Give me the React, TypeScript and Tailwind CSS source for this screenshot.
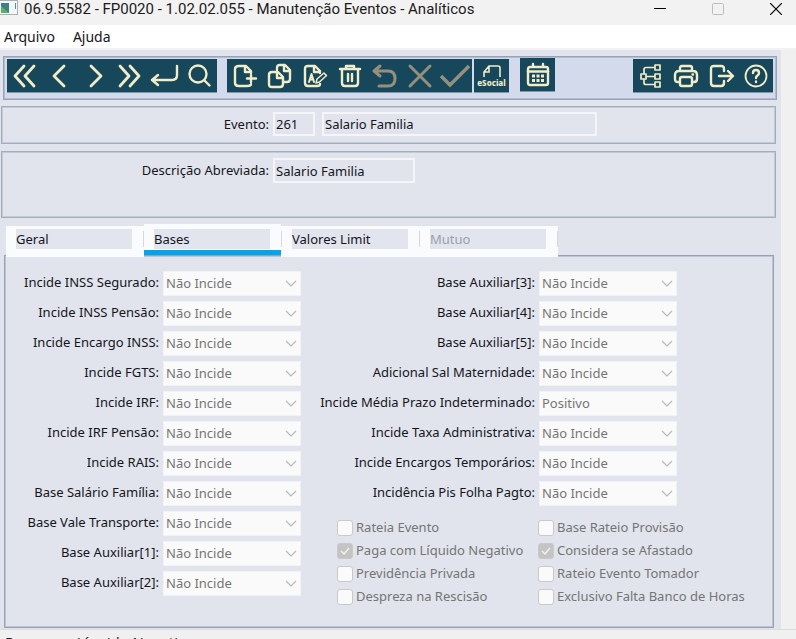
import React from "react";

const leftFields = [
  "Incide INSS Segurado:",
  "Incide INSS Pensão:",
  "Incide Encargo INSS:",
  "Incide FGTS:",
  "Incide IRF:",
  "Incide IRF Pensão:",
  "Incide RAIS:",
  "Base Salário Família:",
  "Base Vale Transporte:",
  "Base Auxiliar[1]:",
  "Base Auxiliar[2]:",
];

const rightFields = [
  "Base Auxiliar[3]:",
  "Base Auxiliar[4]:",
  "Base Auxiliar[5]:",
  "Adicional Sal Maternidade:",
  "Incide Média Prazo Indeterminado:",
  "Incide Taxa Administrativa:",
  "Incide Encargos Temporários:",
  "Incidência Pis Folha Pagto:",
];

const checks = [
  { label: "Rateia Evento", on: false },
  { label: "Base Rateio Provisão", on: false },
  { label: "Paga com Líquido Negativo", on: true },
  { label: "Considera se Afastado", on: true },
  { label: "Previdência Privada", on: false },
  { label: "Rateio Evento Tomador", on: false },
  { label: "Despreza na Rescisão", on: false },
  { label: "Exclusivo Falta Banco de Horas", on: false },
];

function Tool({ label, off, children }: { label: string; off?: boolean; children: React.ReactNode }) {
  return (
    <button
      type="button"
      aria-label={label}
      disabled={off}
      className="flex h-full w-[35px] items-center justify-center text-[#f1edc9] disabled:text-[#958f7d]"
    >
      <svg
        viewBox="0 0 24 24"
        className="size-6 overflow-visible"
        fill="none"
        stroke="currentColor"
        strokeWidth="2.4"
        strokeLinecap="round"
        strokeLinejoin="round"
      >
        {children}
      </svg>
    </button>
  );
}

function Field({ label, value }: { label: string; value: string }) {
  const id = label.replace(/\W/g, "");
  return (
    <div className="flex h-[30px] items-start justify-end gap-1">
      <label htmlFor={id} className="leading-[22px] whitespace-nowrap">
        {label}
      </label>
      <div className="relative">
        <select
          id={id}
          disabled
          className="block h-[25px] w-[138px] appearance-none border border-[#f1f2f5] bg-[#fafafa] pl-0.5 text-[#757575] disabled:opacity-100"
        >
          <option>{value}</option>
        </select>
        <svg
          viewBox="0 0 12 8"
          className="pointer-events-none absolute top-[9px] right-1 h-2 w-3"
          fill="none"
          stroke="#b9b9b9"
          strokeWidth="1.2"
        >
          <path d="M1 1l5 5 5-5" />
        </svg>
      </div>
    </div>
  );
}

function Check({ label, on }: { label: string; on: boolean }) {
  return (
    <label className="flex h-[23px] items-center gap-[3px] whitespace-nowrap text-[#757575]">
      <span className="relative size-4">
        <input
          type="checkbox"
          disabled
          defaultChecked={on}
          className="block size-4 appearance-none rounded-[3px] border border-[#c9c9c9] bg-[#fafafa] checked:bg-[#c4c4c4]"
        />
        {on && (
          <svg
            viewBox="0 0 16 16"
            className="pointer-events-none absolute inset-0 size-4"
            fill="none"
            stroke="#f4f4f4"
            strokeWidth="1.3"
          >
            <path d="M4 8l3 3 5-6" />
          </svg>
        )}
      </span>
      {label}
    </label>
  );
}

function Tab({ label, active, off }: { label: string; active?: boolean; off?: boolean }) {
  return (
    <button
      type="button"
      role="tab"
      aria-selected={!!active}
      disabled={off}
      className={
        active
          ? "h-[31px] w-[137px] shrink-0 border-b-[5px] border-[#03a5ea] bg-[#fafbfd] pr-[11px] pl-2.5"
          : "h-[31px] w-[137px] shrink-0 bg-[#fafbfd] pr-[11px] pl-2.5 disabled:text-[#9a9fae]"
      }
    >
      <span
        className={
          active
            ? "mt-1 block h-5 bg-[#e2e5ed] text-left leading-5"
            : "mb-1.5 block h-5 bg-[#e2e5ed] text-left leading-5"
        }
      >
        {label}
      </span>
    </button>
  );
}

function Divider() {
  return (
    <span className="flex h-[31px] w-px bg-[#fafbfd] pt-[5px]">
      <span className="h-4 w-px bg-[#d6d8dc]" />
    </span>
  );
}

function App() {
  return (
    <div className="flex h-screen flex-col overflow-hidden bg-[#f0f0f0] font-['Noto_Sans',sans-serif] text-[13px] text-[#15151c]">
      <header className="flex h-[25px] shrink-0 items-start bg-[#f2f2f2]">
        <svg viewBox="0 0 18 16" className="h-4 w-[18px]">
          <rect x="0" y="0" width="18" height="15" fill="#a9b0b8" />
          <rect x="0" y="1" width="17" height="13" fill="#f4f6f8" />
          <rect x="1" y="3" width="8" height="10" fill="#3f7f86" />
          <path d="M1 13V6l8 7z" fill="#5fae6c" />
          <rect x="15" y="3" width="1" height="6" fill="#4b9a86" />
        </svg>
        <h1 className="ml-1.5 font-[Roboto,sans-serif] text-[15px] leading-[18px] text-[#1b1b1b]">
          06.9.5582 - FP0020 - 1.02.02.055 - Manutenção Eventos - Analíticos
        </h1>
        <div className="ml-auto flex gap-[46px] pt-[3px] pr-3.5">
          <button type="button" aria-label="Minimizar">
            <svg viewBox="0 0 12 12" className="size-3" stroke="#000">
              <path d="M0 5.5h12" />
            </svg>
          </button>
          <button type="button" aria-label="Maximizar" disabled>
            <svg viewBox="0 0 12 12" className="size-3" fill="none" stroke="#bdbdbd">
              <rect x="0.5" y="0.5" width="11" height="11" rx="1" />
            </svg>
          </button>
          <button type="button" aria-label="Fechar">
            <svg viewBox="0 0 12 12" className="size-3" stroke="#000" strokeWidth="1.2">
              <path d="M0 0l12 12M12 0L0 12" />
            </svg>
          </button>
        </div>
      </header>

      <nav className="flex h-[25px] shrink-0 gap-[18px] border-b-2 border-[#f2f2f2] bg-white pl-1 text-[14px] leading-[24px]">
        <button type="button">Arquivo</button>
        <button type="button">Ajuda</button>
      </nav>

      <main className="mr-[15px] flex shrink-0 flex-col bg-[#e1e4ec] pt-1.5 pb-px">
        <div className="mr-1 ml-[3px] flex h-[44px] items-start border border-[#97a3b6] bg-[#d2daec] px-[3px] pt-px shadow-[inset_0_0_0_1px_#b3bdcf]">
          <div className="mt-px flex h-[34px] border-b border-[#8296a8] bg-[#17475a]">
            <Tool label="Primeiro">
              <path d="M11 2L2 12l9 10M21 2l-9 10 9 10" strokeWidth="2.8" />
            </Tool>
            <Tool label="Anterior">
              <path d="M16 2L6 12l10 10" strokeWidth="2.8" />
            </Tool>
            <Tool label="Próximo">
              <path d="M8 2l10 10L8 22" strokeWidth="2.8" />
            </Tool>
            <Tool label="Último">
              <path d="M2 2l9 10-9 10M12 2l9 10-9 10" strokeWidth="2.8" />
            </Tool>
            <Tool label="Ir para">
              <path d="M24 2v9q0 5-5 5H-1M5 11l-6 5 6 5" />
            </Tool>
            <Tool label="Pesquisar">
              <circle cx="10" cy="10" r="8.5" />
              <path d="M16.500 16.500l5 5" />
            </Tool>
          </div>
          <div className="mt-px ml-2.5 flex h-[34px] border-b border-[#8296a8] bg-[#17475a]">
            <Tool label="Incluir">
              <path d="M18 9V7l-5-5H6Q2 2 2 5v14q0 3 4 3h8q4 0 4-2M12 2v6h6M18 11v7M14 14.500h9" />
            </Tool>
            <Tool label="Copiar">
              <path d="M9 6V4q0-3 3-3h5l5 5v9q0 3-3 3h-3M16 1v6h6M4 8h6l5 5v7q0 3-3 3H4q-3 0-3-3v-9q0-3 3-3zM9 8v6h6" />
            </Tool>
            <Tool label="Alterar">
              <path d="M17 9V7l-5-5H5Q2 2 2 5v14q0 3 3 3h9q3 0 3-2M11 2v6h6" />
              <path d="M6 18l2.500-8L11 18M7 15.500h3" strokeWidth="2" />
              <path d="M13 19l1-4 7-6 2.500 2.500-7 6.500z" strokeWidth="1.5" />
            </Tool>
            <Tool label="Excluir">
              <path d="M2 5h20M8 5V2h8v3M4 5v14q0 3 3 3h10q3 0 3-3V5M10 10v7M14 10v7" />
            </Tool>
            <Tool label="Desfazer" off>
              <path d="M7 2L1 7l6 5M1 7h14q7 0 7 7.500T15 22H6" strokeWidth="3" />
            </Tool>
            <Tool label="Cancelar" off>
              <path d="M2 2l20 20M22 2L2 22" strokeWidth="3" />
            </Tool>
            <Tool label="Confirmar" off>
              <path d="M-2 12l9 9L26 2" strokeWidth="3.5" strokeLinecap="butt" strokeLinejoin="miter" />
            </Tool>
          </div>
          <button
            type="button"
            className="mt-px ml-0.5 flex h-[34px] w-[35px] flex-col items-center justify-end border-b border-[#8296a8] bg-[#17475a] pb-1 text-[#f1edc9]"
          >
            <svg viewBox="0 0 20 13" className="h-[13px] w-5" fill="none" stroke="currentColor" strokeWidth="1.6">
              <path d="M18 12V3q0-2-2-2H7L2 7v5M7 1v6H1.500M2 7v5" />
            </svg>
            <span className="text-[8px] leading-[10px] font-extrabold">eSocial</span>
          </button>
          <div className="ml-[11px] flex h-[34px] border-b border-[#8296a8] bg-[#17475a]">
            <Tool label="Calendário">
              <path d="M4 4h16q2 0 2 2v14q0 2-2 2H4q-2 0-2-2V6q0-2 2-2zM7 1v3M17 1v3" />
              <path d="M2 8.500h20" strokeWidth="2.5" />
              <path
                d="M6 13h3M10.500 13h3M15 13h3M6 17.500h3M10.500 17.500h3M15 17.500h3"
                strokeLinecap="butt"
                strokeWidth="2.8"
              />
            </Tool>
          </div>
          <div className="mt-px ml-auto flex h-[34px] border-b border-[#8296a8] bg-[#17475a]">
            <Tool label="Estrutura">
              <path
                d="M2 10h5v5H2zM16 1h5v5h-5zM16 10h5v5h-5zM16 18h5v5h-5zM7 12.500h9M16 3.500H7q-2 0-2 2V10M5 15v4q0 1.500 2 1.500h9"
                strokeWidth="1.7"
              />
            </Tool>
            <Tool label="Imprimir">
              <path d="M6 7V4q0-2 2-2h8q2 0 2 2v3M6 18H4q-3 0-3-3v-4q0-4 4-4h14q4 0 4 4v4q0 3-3 3h-2M8 13h8q2 0 2 2v5q0 2-2 2H8q-2 0-2-2v-5q0-2 2-2zM18.500 10.500h.5" />
            </Tool>
            <Tool label="Sair">
              <path d="M15 7V5q0-3-3-3H5Q2 2 2 5v14q0 3 3 3h7q3 0 3-3v-2M10 12h14M19 7l5 5-5 5" />
            </Tool>
            <Tool label="Ajuda">
              <circle cx="12" cy="12" r="10.5" strokeWidth="1.8" />
              <path d="M9 9q0-3 3-3t3 3q0 1.500-1.500 2.500T12 14M12 17.500v.5" />
            </Tool>
          </div>
        </div>

        <section className="mx-[5px] mt-1.5 ml-px flex h-[38px] items-start border border-[#a3aebd] p-px pt-[5px] shadow-[inset_0_0_0_1px_#c3cad5]">
          <label htmlFor="evento" className="w-[266px] text-right leading-[24px]">
            Evento:
          </label>
          <input
            id="evento"
            defaultValue="261"
            className="ml-1 h-6 w-[42px] border-2 border-[#f4f5f8] pl-px"
          />
          <input
            aria-label="Nome do evento"
            defaultValue="Salario Familia"
            className="ml-[7px] h-6 w-[275px] border-2 border-[#f4f5f8] pl-px"
          />
        </section>

        <section className="mx-[5px] mt-[7px] ml-px flex h-[67px] items-start border border-[#a3aebd] p-px pt-[6px] shadow-[inset_0_0_0_1px_#c3cad5]">
          <label htmlFor="descricao" className="w-[266px] text-right leading-[24px]">
            Descrição Abreviada:
          </label>
          <input
            id="descricao"
            defaultValue="Salario Familia"
            className="ml-1 h-[25px] w-[142px] border-2 border-[#f4f5f8] pl-px"
          />
        </section>

        <div role="tablist" className="relative mt-1.5 -mb-0.5 ml-1.5 flex h-[33px] items-end">
          <Tab label="Geral" />
          <Divider />
          <div className="self-start">
            <Tab label="Bases" active />
          </div>
          <Divider />
          <Tab label="Valores Limit" />
          <Divider />
          <Tab label="Mutuo" off />
          <Divider />
        </div>

        <section className="mr-[7px] ml-1 flex h-[373px] border border-[#96a2b4] p-px pt-[15px] shadow-[inset_0_0_0_1px_#bcc4d1]">
          <div className="w-[295px]">
            {leftFields.map((f) => (
              <Field key={f} label={f} value="Não Incide" />
            ))}
          </div>
          <div>
            <div className="w-[376px]">
              {rightFields.map((f) => (
                <Field key={f} label={f} value={f.includes("Média") ? "Positivo" : "Não Incide"} />
              ))}
            </div>
            <div className="mt-[5px] ml-9 grid grid-cols-[201px_auto]">
              {checks.map((c) => (
                <Check key={c.label} label={c.label} on={c.on} />
              ))}
            </div>
          </div>
        </section>
      </main>

      <footer className="shrink-0 border-t border-[#dcdcdc] pt-0.5 pl-[5px] font-['Open_Sans',sans-serif] text-[15px] leading-5">
        Paga com Líquido Negativo
      </footer>
    </div>
  );
}

export default App;
